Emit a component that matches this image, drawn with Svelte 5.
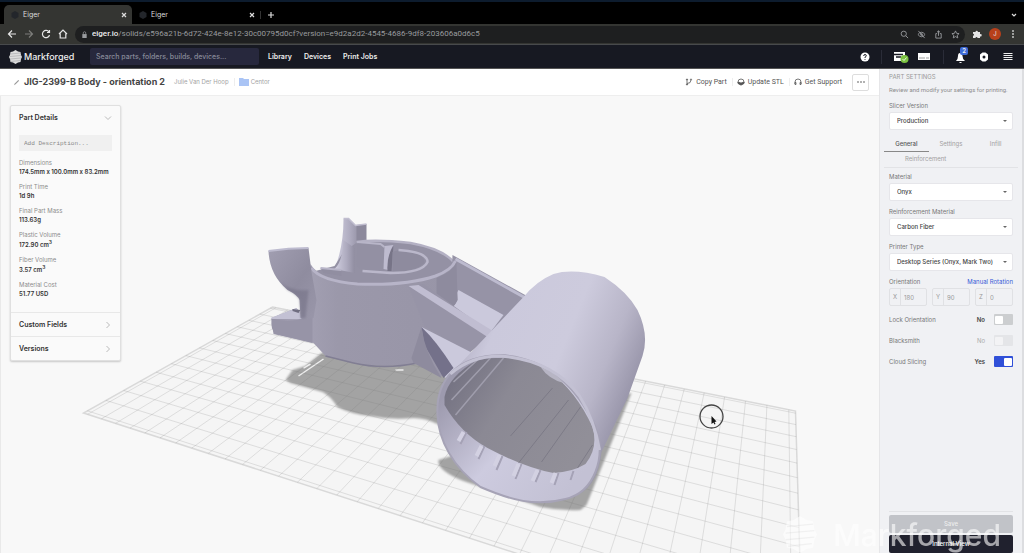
<script>
	// browser chrome
	const tabs = [
		{ label: 'Eiger', active: true },
		{ label: 'Eiger', active: false },
	];

	const links = ['Library', 'Devices', 'Print Jobs'];

	// part details
	const details = [
		{ label: 'Dimensions', value: '174.5mm x 100.0mm x 83.2mm' },
		{ label: 'Print Time', value: '1d 9h' },
		{ label: 'Final Part Mass', value: '113.63g' },
		{ label: 'Plastic Volume', value: '172.90 cm', cubed: true },
		{ label: 'Fiber Volume', value: '3.57 cm', cubed: true },
		{ label: 'Material Cost', value: '51.77 USD' },
	];

	// part settings
	const materials = [
		{ id: 'material', label: 'Material', value: 'Onyx' },
		{ id: 'reinforcement', label: 'Reinforcement Material', value: 'Carbon Fiber' },
		{ id: 'printer', label: 'Printer Type', value: 'Desktop Series (Onyx, Mark Two)' },
	];
	const settingTabs = ['General', 'Settings', 'Infill', 'Reinforcement'];
	let activeTab = $state('General');

	const axes = [
		{ key: 'X', value: '180' },
		{ key: 'Y', value: '90' },
		{ key: 'Z', value: '0' },
	];

	let toggles = $state([
		{ label: 'Lock Orientation', on: false },
		{ label: 'Blacksmith', on: false, disabled: true },
		{ label: 'Cloud Slicing', on: true },
	]);

	// build plate: back, right, front, left corner
	const A = [272, 307];
	const C = [795, 411];
	const D = [802, 646];
	const B = [83, 413];

	// maps the unit square onto the plate in perspective
	function project(u, v) {
		const dx1 = C[0] - D[0], dy1 = C[1] - D[1];
		const dx2 = B[0] - D[0], dy2 = B[1] - D[1];
		const sx = A[0] - C[0] + D[0] - B[0];
		const sy = A[1] - C[1] + D[1] - B[1];
		const det = dx1 * dy2 - dx2 * dy1;
		const g = (sx * dy2 - dx2 * sy) / det;
		const h = (dx1 * sy - sx * dy1) / det;
		const w = g * u + h * v + 1;
		const x = (C[0] - A[0] + g * C[0]) * u + (B[0] - A[0] + h * B[0]) * v + A[0];
		const y = (C[1] - A[1] + g * C[1]) * u + (B[1] - A[1] + h * B[1]) * v + A[1];
		return `${(x / w).toFixed(1)} ${(y / w).toFixed(1)}`;
	}

	const plateWidth = 32.6;
	const plateDepth = 13.4;
	let grid = '';
	for (let i = 0; i <= 32; i++) {
		const u = (i + 0.3) / plateWidth;
		grid += `M${project(u, 0)}L${project(u, 1)}`;
	}
	for (let i = 0; i <= 13; i++) {
		const v = (i + 0.2) / plateDepth;
		grid += `M${project(0, v)}L${project(1, v)}`;
	}
	const plate = `M${project(0, 0)}L${project(1, 0)}L${project(1, 1)}L${project(0, 1)}Z`;
</script>

{#snippet logo()}
	<svg class="logo" viewBox="0 0 26 28" aria-hidden="true">
		<path d="M8 3l5-3 5 3 5 1 1 6 2 4-2 4-1 6-5 1-5 3-5-3-5-1-1-6-2-4 2-4 1-6z" fill="currentColor" />
		<path class="stripes" d="M3 8l20-2M2 13l22-2M2 18l22-2M4 23l18-2" />
	</svg>
{/snippet}

{#snippet chevron(down)}
	<svg class="chevron" viewBox="0 0 8 8" aria-hidden="true">
		<path d={down ? 'M1 2.5l3 3 3-3' : 'M2.5 1l3 3-3 3'} />
	</svg>
{/snippet}

<div class="window">
	<div class="tabbar">
		{#each tabs as tab}
			<div class="tab" class:active={tab.active}>
				<svg viewBox="0 0 8 8" class="favicon"><path d="M4 0l3.5 2v4L4 8 .5 6V2z" /></svg>
				<span>{tab.label}</span>
				<button aria-label="Close tab"><svg viewBox="0 0 6 6"><path d="M1 1l4 4M5 1L1 5" /></svg></button>
			</div>
		{/each}
		<button class="newtab" aria-label="New tab"><svg viewBox="0 0 8 8"><path d="M4 1v6M1 4h6" /></svg></button>
		<button class="tablist" aria-label="Search tabs"><svg viewBox="0 0 8 8"><path d="M2 3l2 2 2-2" /></svg></button>
	</div>

	<div class="toolbar">
		<button aria-label="Back"><svg viewBox="0 0 10 10"><path d="M9 5H1.5M5 1.5L1.5 5 5 8.5" /></svg></button>
		<button aria-label="Forward" class="dim"><svg viewBox="0 0 10 10"><path d="M1 5h7.5M5 1.5L8.5 5 5 8.5" /></svg></button>
		<button aria-label="Reload"><svg viewBox="0 0 10 10"><path d="M8 3a3.6 3.6 0 1 0 .5 3M8.5 1v2.5H6" /></svg></button>
		<button aria-label="Home"><svg viewBox="0 0 10 10"><path d="M1 5l4-4 4 4M2.2 4.5V9h5.6V4.5" /></svg></button>
		<div class="url">
			<svg viewBox="0 0 8 8" class="lock"><path d="M1.5 3.5h5V8h-5z" /><path d="M2.6 4V2.2a1.4 1.4 0 0 1 2.8 0V4" fill="none" stroke="currentColor" stroke-width=".8" /></svg>
			<span class="address"><b>eiger.io</b>/solids/e596a21b-6d72-424e-8e12-30c00795d0cf?version=e9d2a2d2-4545-4686-9df8-203606a0d6c5</span>
			<button aria-label="Zoom"><svg viewBox="0 0 10 10"><circle cx="4.2" cy="4.2" r="2.9" /><path d="M6.4 6.4L9 9" /></svg></button>
			<button aria-label="Cookies blocked"><svg viewBox="0 0 10 10"><path d="M1 5q4-5 8 0-4 5-8 0zM1.5 1l7 8" /><circle cx="5" cy="5" r="1" /></svg></button>
			<button aria-label="Share"><svg viewBox="0 0 10 10"><path d="M3.5 4H2v5h6V4H6.5M5 6.5V1M3.300 2.5L5 1l1.7 1.5" /></svg></button>
			<button aria-label="Bookmark"><svg viewBox="0 0 10 10"><path d="M5 1l1.2 2.700 2.800.3-2.100 1.900.6 2.900L5 7.300 2.500 8.800l.6-2.900L1 4l2.800-.3z" /></svg></button>
		</div>
		<button aria-label="Extensions"><svg viewBox="0 0 10 10"><path d="M1 3h2.5a1.2 1.2 0 1 1 2.4 0H8v2.2a1.2 1.2 0 1 1 0 2.2V9H5.5a1 1 0 0 0-2 0H1V6.8a1 1 0 0 0 0-2z" fill="currentColor" stroke="none" /></svg></button>
		<button class="avatar">J</button>
		<button aria-label="Menu"><svg viewBox="0 0 10 10"><path d="M5 1v2M5 4v2M5 7v2" /></svg></button>
	</div>

	<header class="nav">
		<a class="brand" href="/">{@render logo()}Markforged</a>
		<input class="search" type="search" aria-label="Search" placeholder="Search parts, folders, builds, devices..." />
		<nav>
			{#each links as link}
				<a href="/">{link}</a>
			{/each}
		</nav>
		<div class="navicons">
			<button aria-label="Help"><svg viewBox="0 0 10 10"><circle cx="5" cy="5" r="4.5" fill="#fff" /><path d="M3.700 4q0-1.500 1.400-1.500 1.300.1 1.200 1.300Q6.200 4.700 5 5.200V6M5 7v.8" fill="none" stroke="#171922" /></svg></button>
			<span class="divider"></span>
			<button aria-label="Printers" class="wide"><svg viewBox="0 0 16 12"><path d="M1 1h11v9H1z" fill="#fff" /><path d="M1 3.500h9M3 6h5" stroke="#171922" stroke-width="1.500" /><circle cx="11.500" cy="8" r="4" fill="#7cc242" /><path d="M9.500 8l1.500 1.500 2.500-3" fill="none" stroke="#fff" stroke-width=".8" /></svg></button>
			<button aria-label="Jobs" class="wide"><svg viewBox="0 0 16 12"><path d="M2 2h12v7H2z" fill="#fff" /><path d="M3 7h6M10 7h3" stroke="#777" stroke-width=".7" /></svg></button>
			<span class="divider"></span>
			<button aria-label="Notifications" class="bell"><svg viewBox="0 0 14 14"><path d="M1 11q2-2 2-5 0-3 2-3t2.500 3q0 3 2.500 5zM4 12h3q-1.500 2-3 0z" fill="#fff" /></svg><span>2</span></button>
			<button aria-label="Settings" class="gear"><svg viewBox="0 0 10 10"><path d="M3.500.5h3l2.500 2v5l-2.500 2h-3L1 7.500v-5z" fill="#fff" /><circle cx="5" cy="5" r="1.500" fill="#171922" /></svg></button>
			<button aria-label="Menu"><svg viewBox="0 0 10 10"><path d="M.5 1.500h9M.5 3.500h9M.5 5.500h9M.5 7.500h9" stroke="#eee" /></svg></button>
		</div>
	</header>

	<div class="page">
		<main>
			<div class="titlebar">
				<svg class="pencil" viewBox="0 0 8 8"><path d="M1 7l1-2 4-4 1 1-4 4z" /></svg>
				<h1>JIG-2399-B Body - orientation 2</h1>
				<span class="owner">Julie Van Der Hoop</span>
				<a class="folder" href="/">
					<svg viewBox="0 0 10 8"><path d="M0 0h4l1 1h5v7H0z" /></svg>Centor
				</a>
				<div class="actions">
					<button><svg viewBox="0 0 8 8"><path d="M2 1v6M2 5.500q4 0 4-3.500" /><circle cx="2" cy="1.500" r=".6" /><circle cx="2" cy="6.500" r=".6" /><circle cx="6" cy="1.500" r=".6" /></svg>Copy Part</button>
					<button><svg viewBox="0 0 8 8"><path d="M1 4q0-3 3-3t3 3v1L4 7 1 5z" /><path d="M1 4l3 1 3-1v1.500L4 7 1 5.500z" fill="currentColor" /></svg>Update STL</button>
					<button><svg viewBox="0 0 8 8"><path d="M1 6V4a3 3 0 0 1 6 0v2M1 4.500v2h1v-2zM6 4.500v2h1v-2z" /></svg>Get Support</button>
					<button class="more" aria-label="More"><i></i><i></i><i></i></button>
				</div>
			</div>

			<div class="stage">
				<svg class="scene" viewBox="0 96 879 457" preserveAspectRatio="xMidYMid slice" role="img" aria-label="Part preview">
					<defs>
						<linearGradient id="tube" gradientUnits="userSpaceOnUse" x1="470" y1="330" x2="640" y2="400">
							<stop offset="0" stop-color="#b9b6ca" />
							<stop offset=".12" stop-color="#cbc9dc" />
							<stop offset=".5" stop-color="#cdcbdd" />
							<stop offset=".75" stop-color="#b8b5c8" />
							<stop offset="1" stop-color="#8e8ba0" />
						</linearGradient>
						<linearGradient id="rim" gradientUnits="userSpaceOnUse" x1="440" y1="400" x2="560" y2="500">
							<stop offset="0" stop-color="#9d9aae" />
							<stop offset=".5" stop-color="#cdcbdf" />
							<stop offset="1" stop-color="#c3c1d4" />
						</linearGradient>
						<linearGradient id="bore" gradientUnits="userSpaceOnUse" x1="450" y1="370" x2="580" y2="450">
							<stop offset="0" stop-color="#737181" />
							<stop offset=".4" stop-color="#8b8994" />
							<stop offset="1" stop-color="#918f98" />
						</linearGradient>
						<linearGradient id="drum" x1="0" x2="1">
							<stop offset="0" stop-color="#9996a9" />
							<stop offset=".12" stop-color="#a5a2b5" />
							<stop offset=".3" stop-color="#9b98aa" />
							<stop offset="1" stop-color="#9794a6" />
						</linearGradient>
						<linearGradient id="fin" x1="0" x2="1" y1="0" y2="1">
							<stop offset="0" stop-color="#a19eb1" />
							<stop offset=".55" stop-color="#8f8c9f" />
							<stop offset="1" stop-color="#9a97aa" />
						</linearGradient>
						<linearGradient id="blade" x1="0" x2="1">
							<stop offset="0" stop-color="#d2d0e1" />
							<stop offset=".6" stop-color="#aeabbf" />
							<stop offset="1" stop-color="#918ea1" />
						</linearGradient>
						<filter id="soft"><feGaussianBlur stdDeviation="1" /></filter>
					</defs>

					<path d={plate} fill="#f5f5f5" stroke="#d9d9d9" stroke-width="1.5" />

					<!-- shadows on the plate -->
					<g fill="#a3a3a3" filter="url(#soft)">
						<path d="M285 380L292 370 305 366 321 353 345 350 470 370 470 436 437 424Q425 418 413 418 390 420 370 416 350 414 337 407 330 396 322 392L290 383Z" />
						<path d="M438 460Q436 470 463 481L540 507Q560 511 580 510L586 505 631 393 600 400 470 450Z" />
					</g>
					<path d="M298 376L323 359M303 368L310 364M395 370h8" stroke="#eee" stroke-width="1.5" />
					<path d={grid} fill="none" stroke="#777" stroke-opacity=".24" stroke-width=".8" />

					<!-- blade standing behind the drum -->
					<path d="M355 225L366 224V246L354 250Z" fill="#8c899c" />
					<path d="M343 219L348 218 356 226V250L360 274 334 269Q343 247 343 219Z" fill="url(#blade)" />
					<path d="M343 218.500h5L355 225.500l11-1.500" fill="none" stroke="#c1bed0" stroke-width="1.5" />

					<!-- drum interior -->
					<path d="M357 242Q375 239 405 242 440 248 453 262L440 284 390 292 345 290 311 272 334 266 343 252Z" fill="#9491a4" />
					<path d="M334 269Q342 262 343 240L354 248V273Z" fill="url(#blade)" />
					<path d="M357 242L380 243 384 246V271L362 271 356 266Z" fill="#9390a3" />
					<path d="M384 246L393 245 388 270 383 269Z" fill="#bebbcf" />
					<path d="M393 245L391 271 387 271Q386 256 393 245Z" fill="#777487" />
					<path d="M398 250Q425 252 424 263 414 272 392 272V252Z" fill="#8e8b9e" />
					<path d="M398 250Q427 252 427 262 422 273 390 273L362 271" fill="none" stroke="#bab7ca" stroke-width="2.5" />
					<path d="M356 242Q375 239 410 243 443 249 454 263" fill="none" stroke="#b4b1c4" stroke-width="2.5" />
					<path d="M320 268L341 270V276L323 273Z" fill="#918ea1" />
					<path d="M320 268L341 270M357 242L380 244 384 247" fill="none" stroke="#b8b5c8" stroke-width="2" />

					<!-- arm to the tube -->
					<path d="M452 255L530 298 500 345 450 310Z" fill="#9693a6" />
					<path d="M458 290L503 315 487 336 448 308Z" fill="#cbc9dc" />
					<path d="M455 259L525 298" stroke="#bdbbcf" stroke-width="3" />

					<!-- drum wall -->
					<path d="M310 264Q318 279 357 283 405 286 435 276 452 269 455 262L457 300Q452 310 448 308L492 334 470 352 440 377 417 363Q383 369 353 363L325 356 313 343 273 334 271 318 296 308 304 318Z" fill="url(#drum)" />
					<path d="M311 268Q320 281 357 284 405 286 435 276 451 270 455 261" fill="none" stroke="#b7b4c8" stroke-width="3" />
					<path d="M325 356L353 363Q383 370 417 363" fill="none" stroke="#817e93" stroke-width="1.5" />
					<path d="M436 278Q453 271 456 262L457 300Q453 309 449 306L436 298Z" fill="#8e8b9e" />

					<!-- front rib -->
					<path d="M408 286L423 284 492 334 468 352 424 326Z" fill="#9794a7" />
					<path d="M408 286L418 285 494 332 487 337Z" fill="#c0bdd1" />
					<path d="M421 327L474 354 462 376 445 378Z" fill="#cbc9dc" />
					<path d="M421 327Q436 341 453 368L443 378 424 345Z" fill="#74718a" />
					<path d="M421 327Q424 352 441 378L413 363 411 358Z" fill="#8e8b9e" />

					<!-- left fin and lip -->
					<path d="M270 318L296 308 304 319 272 319Z" fill="#c3c1d4" />
					<path d="M272 319Q290 323 304 318L312 312V343L275 334Q270 330 271 319Z" fill="#9794a7" />
					<path d="M292 309l8 1-2 3-6-2z" fill="#6f6d80" />
					<path d="M268 251Q288 248 308 248L311 272 316 300 313 318 303 320 300 318 299 300Q297 295 287 290 269 275 268 251Z" fill="url(#fin)" />
					<path d="M280 282Q290 292 308 290L305 318H300L299 300Q297 295 287 290Z" fill="#6c697e" opacity=".45" filter="url(#soft)" />
					<path d="M268 251Q288 248 308 248" fill="none" stroke="#bdbbcf" stroke-width="2" />

					<!-- tube -->
					<path d="M437 415Q438 390 450 374L523 297Q536 281 553 274 573 268 604 277 627 292 637 310 649 335 642 356L627 398 601 452Q597 490 570 498Z" fill="url(#tube)" />
					<path d="M437 415C435 378 458 356 500 355 552 358 580 395 595 427 606 457 594 492 565 499 535 507 510 500 480 487 452 467 438 440 437 415Z" fill="url(#rim)" stroke="#a6a3b6" stroke-width="2" />
					<path d="M444 397Q448 376 477 360 520 352 548 371 575 390 592 427 598 448 585 464 572 472 553 473 525 468 487 448 460 433 444 405Z" fill="url(#bore)" />
					<path d="M540 367Q548 379 563 383 556 373 540 367Z" fill="#b7b5c4" />
					<path d="M477 360L453 382M490 358L451 400M503 358L455 415" stroke="#9f9dac" stroke-width="1.5" />
					<path d="M552 388L510 436M568 400L518 463M580 407L541 462M592 445L577 468" stroke="#706e7c" opacity=".6" />
					<path d="M466 432l-6 12M484 446l-6 13M502 456l-6 14M521 464l-6 15M540 470l-5 12M558 473l-4 12M573 471l-3 9" stroke="#a5a2b6" stroke-width="2" />
					<path d="M463 432l-5 9M481 446l-5 10M499 455l-5 11M518 464l-5 12M537 470l-5 11M555 473l-4 10" stroke="#d3d1e2" stroke-width="4" />
					<path d="M450 374Q470 356 500 356 552 360 579 396 594 420 599 450" fill="none" stroke="#c3c1d3" stroke-width="3" />

					<!-- pointer -->
					<circle cx="711" cy="416.500" r="11.500" fill="none" stroke="#444" stroke-width="1.3" />
					<path d="M711 416v8l2-1.500 1 2 1-.5-1-2 2-.5z" fill="#111" />
				</svg>

				<section class="details">
					<button class="head">Part Details {@render chevron(true)}</button>
					<div class="body">
						<input class="description" aria-label="Description" placeholder="Add Description..." />
						<dl>
							{#each details as item}
								<dt>{item.label}</dt>
								<dd class:cubed={item.cubed}>{item.value}{#if item.cubed}<sup>3</sup>{/if}</dd>
							{/each}
						</dl>
					</div>
					<button class="head">Custom Fields {@render chevron(false)}</button>
					<button class="head">Versions {@render chevron(false)}</button>
				</section>
			</div>
		</main>

		<aside>
			<h2>PART SETTINGS</h2>
			<p>Review and modify your settings for printing.</p>
			<div class="field">
				<label for="slicer">Slicer Version</label>
				<div class="select"><select id="slicer"><option>Production</option></select></div>
			</div>

			<div class="settingtabs" role="tablist">
				{#each settingTabs as tab}
					<button role="tab" aria-selected={activeTab === tab} class:active={activeTab === tab} onclick={() => (activeTab = tab)}>{tab}</button>
				{/each}
			</div>

			{#each materials as item}
				<div class="field">
					<label for={item.id}>{item.label}</label>
					<div class="select"><select id={item.id}><option>{item.value}</option></select></div>
				</div>
			{/each}

			<div class="orientation">
				<span>Orientation</span>
				<a href="/">Manual Rotation</a>
			</div>
			<div class="axes">
				{#each axes as axis}
					<label><span>{axis.key}</span><input value={axis.value} disabled /></label>
				{/each}
			</div>

			{#each toggles as toggle}
				<label class="toggle" class:disabled={toggle.disabled}>
					<span>{toggle.label}</span>
					<b>{toggle.on ? 'Yes' : 'No'}</b>
					<input type="checkbox" bind:checked={toggle.on} disabled={toggle.disabled} />
				</label>
			{/each}

			<footer>
				<button class="save">Save</button>
				<button class="internal">Internal View</button>
			</footer>
		</aside>
	</div>

	<div class="watermark">{@render logo()}Markforged</div>
</div>

<style>
	:global(body) {
		margin: 0;
	}

	.window {
		position: relative;
		display: flex;
		flex-direction: column;
		height: 100vh;
		overflow: hidden;
		box-sizing: border-box;
		border-top: 2px solid #0d1c2e;
		background: #f8f8f8;
		font-family: Inter, 'Liberation Sans', sans-serif;
		font-size: 6px;
		line-height: 8px;
		color: #333;
	}
	.window :global(*) {
		box-sizing: border-box;
	}
	button,
	input,
	select {
		font: inherit;
		color: inherit;
		padding: 0;
		margin: 0;
		border: none;
		background: none;
	}
	button {
		display: flex;
		align-items: center;
		cursor: pointer;
	}
	a {
		color: inherit;
		text-decoration: none;
	}
	svg {
		flex: none;
	}

	/* browser */
	.tabbar {
		display: flex;
		align-items: center;
		height: 22px;
		flex: none;
		padding: 3px 6px 0 4px;
		background: #000;
		color: #ddd;
		font-size: 7px;
	}
	.tab {
		display: flex;
		align-items: center;
		gap: 8px;
		width: 128px;
		height: 100%;
		padding: 0 5px 0 7px;
		border-radius: 5px 5px 0 0;
	}
	.tab.active {
		background: #343532;
	}
	.tab button {
		margin-left: auto;
	}
	.favicon {
		width: 8px;
		height: 8px;
		margin-right: -4px;
		fill: #23262b;
	}
	.tabbar button svg,
	.toolbar button svg {
		fill: none;
		stroke: currentColor;
		stroke-width: 1.2;
	}
	.tab button svg {
		width: 6px;
		height: 6px;
	}
	.newtab {
		padding-left: 6px;
		border-left: 1px solid #333;
	}
	.newtab svg,
	.tablist svg {
		width: 8px;
		height: 8px;
	}
	.tablist {
		margin-left: auto;
	}

	.toolbar {
		display: flex;
		align-items: center;
		gap: 7px;
		flex: none;
		height: 21px;
		padding: 0 6px 0 7px;
		background: #343532;
		border-bottom: 1px solid #484a4c;
		color: #e5e5e5;
	}
	.toolbar svg {
		width: 10px;
		height: 10px;
	}
	.toolbar .dim {
		color: #7c7d7a;
	}
	.url {
		display: flex;
		align-items: center;
		flex: 1;
		min-width: 0;
		gap: 7px;
		height: 17px;
		padding: 0 4px 0 6px;
		border-radius: 9px;
		background: #1e1f20;
		color: #999b9e;
		font-family: Roboto, sans-serif;
		font-size: 8px;
	}
	.url .lock {
		width: 7px;
		height: 7px;
		margin-right: -3px;
		fill: currentColor;
	}
	.url b {
		color: #eee;
		font-weight: 500;
	}
	.address {
		flex: 1;
		min-width: 0;
		white-space: nowrap;
		overflow: hidden;
	}
	.url button svg {
		width: 9px;
		height: 9px;
		stroke-width: 1;
	}
	.url button {
		width: 10px;
	}
	.avatar {
		justify-content: center;
		width: 12px;
		height: 12px;
		border-radius: 50%;
		background: #b8401b;
	}

	/* app header */
	.nav {
		display: flex;
		align-items: center;
		flex: none;
		height: 24px;
		padding: 0 11px 0 9px;
		background: #171922;
		border-bottom: 1px solid #555;
		color: #eee;
		font-size: 7px;
		font-weight: 600;
	}
	.brand {
		display: flex;
		align-items: center;
		gap: 2px;
		width: 81px;
		font-size: 9px;
		font-weight: 500;
	}
	.brand .logo {
		width: 13px;
		height: 14px;
		color: #ddd;
	}
	.stripes {
		stroke: #171922;
		stroke-opacity: 0.35;
	}
	.search {
		width: 169px;
		height: 17px;
		padding: 0 6px;
		border-radius: 2px;
		background: #27283d;
		font-weight: 500;
		outline: none;
	}
	.search::placeholder {
		color: #888a99;
	}
	.nav nav {
		display: flex;
		gap: 12px;
		padding-left: 9px;
	}
	.navicons {
		display: flex;
		align-items: center;
		gap: 10px;
		margin-left: auto;
	}
	.navicons button svg {
		width: 10px;
		height: 10px;
	}
	.divider {
		width: 1px;
		height: 14px;
		margin: 0 1px;
		background: #2a2c38;
	}
	.navicons .wide svg {
		width: 16px;
		height: 12px;
	}
	.wide + .wide {
		margin-left: -3px;
	}
	.bell {
		position: relative;
	}
	.navicons .bell svg {
		width: 14px;
		height: 14px;
	}
	.bell span {
		position: absolute;
		right: 1px;
		top: -3px;
		width: 8px;
		height: 8px;
		border-radius: 2px;
		background: #3d6ad6;
		font-size: 6px;
	}
	.gear {
		margin-right: 4px;
	}

	.page {
		display: flex;
		flex: 1;
		min-height: 0;
	}
	main {
		display: flex;
		flex-direction: column;
		flex: 1;
		min-width: 0;
	}

	/* title */
	.titlebar {
		display: flex;
		align-items: center;
		flex: none;
		height: 27px;
		padding: 0 10px 0 13px;
		background: #fff;
		border-bottom: 1px solid #eee;
		white-space: nowrap;
	}
	.pencil {
		width: 7px;
		height: 7px;
		fill: #999;
	}
	h1 {
		margin: 0 0 0 4px;
		font-size: 9px;
		font-weight: 700;
		line-height: 12px;
		color: #444;
	}
	.owner {
		margin-left: 9px;
		padding-right: 5px;
		border-right: 1px solid #eee;
		color: #a3a3a3;
	}
	.folder {
		display: flex;
		align-items: center;
		gap: 2px;
		margin-left: 4px;
		color: #a3a3a3;
	}
	.folder svg {
		width: 10px;
		height: 8px;
		fill: #aac4f5;
	}
	.actions {
		display: flex;
		align-items: center;
		gap: 4px;
		margin-left: auto;
		font-family: Roboto, sans-serif;
		font-size: 7px;
		color: #555;
	}
	.actions button {
		gap: 3px;
		padding-right: 5px;
		border-right: 1px solid #eee;
	}
	.actions button:nth-child(3) {
		border-color: transparent;
	}
	.actions svg {
		width: 8px;
		height: 8px;
		fill: none;
		stroke: currentColor;
		stroke-width: 0.8;
	}
	.actions .more {
		justify-content: center;
		gap: 1px;
		width: 17px;
		height: 17px;
		padding: 0;
		border: 1px solid #ddd;
		border-radius: 2px;
	}
	.more i {
		width: 2px;
		height: 2px;
		border-radius: 50%;
		background: #999;
	}

	/* preview */
	.stage {
		position: relative;
		flex: 1;
		min-height: 0;
		padding: 9px;
		border-left: 1px solid #e9e9e9;
	}
	.scene {
		position: absolute;
		inset: 0;
		width: 100%;
		height: 100%;
	}
	.details {
		position: relative;
		width: 111px;
		border: 1px solid #e0e0e0;
		border-radius: 2px;
		background: #fafafa;
		box-shadow: 0 1px 2px #0003;
	}
	.head {
		justify-content: space-between;
		width: 100%;
		height: 24px;
		padding: 0 8px;
		font-size: 7px;
		font-weight: 600;
	}
	.body + .head,
	.head + .head {
		border-top: 1px solid #e8e8e8;
	}
	.chevron {
		width: 8px;
		height: 8px;
		fill: none;
		stroke: #aaa;
		stroke-width: 0.8;
	}
	.body {
		padding: 5px 8px 7px;
	}
	.description {
		display: block;
		width: 100%;
		height: 16px;
		padding: 0 5px;
		background: #f0f0f0;
		font-family: 'Liberation Mono', monospace;
	}
	.description::placeholder {
		color: #888;
	}
	dl {
		margin: 8px 0 0;
	}
	dt {
		color: #8c8c8c;
	}
	dd {
		margin: 1px 0 7px;
		font-weight: 600;
		white-space: nowrap;
	}
	dd.cubed {
		line-height: 9px;
	}
	sup {
		font-size: 5px;
		line-height: 1px;
	}

	/* settings */
	aside {
		display: flex;
		flex-direction: column;
		flex: none;
		width: 145px;
		padding: 4px 9px 0;
		border-left: 1px solid #e6e6e8;
		border-right: 2px solid #dcdde0;
		background: #f0f1f4;
		color: #777;
	}
	h2 {
		margin: 0;
		font-size: 6px;
		font-weight: 400;
		line-height: 8px;
		color: #999;
	}
	aside p {
		margin: 5px 0 8px;
		white-space: nowrap;
		color: #8c8c8c;
		font-family: Roboto, sans-serif;
	}
	.field {
		margin-bottom: 7px;
	}
	.field label {
		display: block;
		margin-bottom: 2px;
	}
	.select {
		position: relative;
	}
	.select::after {
		content: '';
		position: absolute;
		right: 6px;
		top: 8px;
		border: 2px solid transparent;
		border-top-color: #666;
		pointer-events: none;
	}
	select {
		display: block;
		width: 100%;
		height: 18px;
		padding: 0 7px;
		border: 1px solid #e6e6ea;
		border-radius: 2px;
		background: #fff;
		appearance: none;
		color: #444;
		font-weight: 500;
	}
	.settingtabs {
		display: flex;
		flex-wrap: wrap;
		margin: 0 -5px 5px;
		border-bottom: 1px solid #e2e3e6;
	}
	.settingtabs button {
		justify-content: center;
		width: 33.33%;
		height: 15px;
		color: #a0a0a0;
		border-bottom: 1px solid transparent;
	}
	.settingtabs button:last-child {
		width: 62%;
	}
	.settingtabs button.active {
		color: #555;
		font-weight: 500;
		border-color: #888;
	}
	.orientation {
		display: flex;
		justify-content: space-between;
		margin-bottom: 2px;
	}
	.orientation a {
		color: #3458d6;
	}
	.axes {
		display: flex;
		gap: 5px;
		margin-bottom: 8px;
		color: #999;
	}
	.axes label {
		display: flex;
		flex: 1;
		align-items: center;
		height: 18px;
		border: 1px solid #e0e1e4;
		border-radius: 2px;
	}
	.axes span {
		width: 10px;
		text-align: center;
	}
	.axes input {
		flex: 1;
		width: 0;
		height: 100%;
		padding: 0 3px;
		border-left: 1px solid #e0e1e4;
	}
	.toggle {
		display: flex;
		align-items: center;
		height: 11px;
		margin-bottom: 10px;
	}
	.toggle span {
		flex: 1;
	}
	.toggle b {
		font-weight: 600;
		color: #444;
	}
	.toggle.disabled b {
		font-weight: 400;
		color: #aaa;
	}
	.toggle input {
		display: flex;
		align-items: center;
		width: 19px;
		height: 11px;
		padding: 0 1px;
		margin-left: 9px;
		border-radius: 1px;
		background: #ccced0;
		appearance: none;
	}
	.toggle input::before {
		content: '';
		width: 8px;
		height: 8px;
		border-radius: 1px;
		background: #fff;
	}
	.toggle input:checked {
		justify-content: flex-end;
		background: #3050d8;
	}
	.toggle.disabled input {
		background: #e4e5e8;
	}
	.toggle.disabled input::before {
		background: #f3f3f5;
	}
	footer {
		display: flex;
		flex-direction: column;
		gap: 2px;
		margin-top: auto;
		padding-top: 3px;
		border-top: 1px solid #e2e3e6;
	}
	footer button {
		justify-content: center;
		height: 18px;
		border-radius: 2px;
		color: #eee;
		font-weight: 500;
	}
	.save {
		background: #c1c3c8;
	}
	.internal {
		background: #20212e;
		color: #fff;
	}

	.watermark {
		position: absolute;
		right: 23px;
		bottom: 0;
		display: flex;
		align-items: center;
		gap: 16px;
		font-size: 30px;
		font-weight: 500;
		line-height: 30px;
		color: #fff;
		opacity: 0.6;
		pointer-events: none;
	}
	.watermark .logo {
		width: 34px;
		height: 37px;
	}
	.watermark .stripes {
		stroke: #eee;
		stroke-opacity: 1;
	}
</style>
